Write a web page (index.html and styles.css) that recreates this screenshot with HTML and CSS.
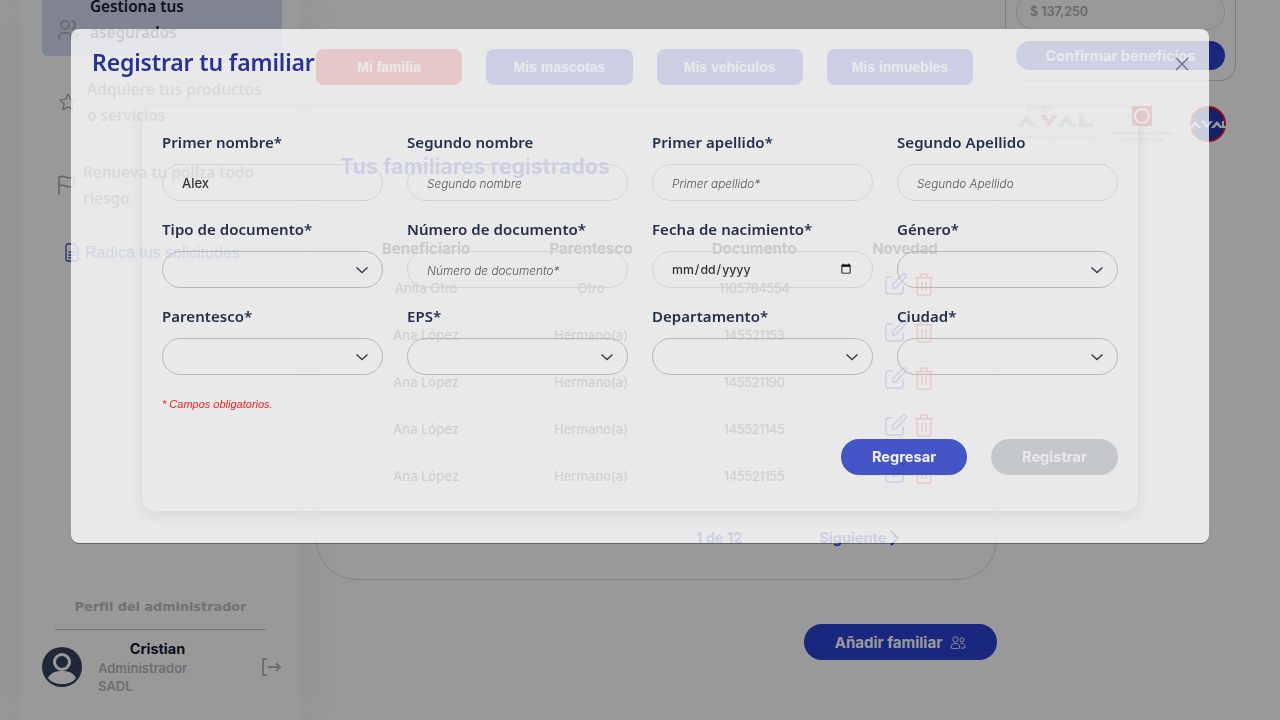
FILE: index.html
```html
<!DOCTYPE html>
<html lang="es">
<head>
<meta charset="utf-8">
<title>Registrar tu familiar</title>
<link rel="stylesheet" href="styles.css">
</head>
<body>
<div class="page">
  <aside class="sidebar">
    <nav class="nav">
      <a class="nav-item nav-active">
        <svg class="ico-users" viewBox="0 0 24 24" width="24" height="24"><circle cx="9" cy="7" r="4"/><path d="M3 21v-2a4 4 0 0 1 4-4h4a4 4 0 0 1 4 4v2M16 3.1a4 4 0 0 1 0 7.8M21 21v-2a4 4 0 0 0-3-3.9"/></svg>
        <span>Gestiona tus asegurados</span>
      </a>
      <a class="nav-item nav-second">
        <svg viewBox="0 0 24 24" width="20" height="20"><path d="M12 2.5l2.9 6.2 6.6.9-4.8 4.6 1.2 6.7-5.9-3.2-5.9 3.2 1.2-6.7-4.8-4.6 6.6-.9z"/></svg>
        <span>Adquiere tus productos o servicios</span>
      </a>
      <a class="nav-item nav-third">
        <svg viewBox="0 0 17 20" width="17" height="20"><path d="M1 19V2c4-2 5-.5 8 .5 2 .7 4 .5 7-.5v9c-3 1-5 1.200-7 .5-3-1-4-2.500-8-.5"/></svg>
        <span>Renueva tu póliza todo riesgo</span>
      </a>
      <a class="nav-item nav-link">
        <svg viewBox="0 0 14 19" width="14" height="19"><path d="M1 2.500A1.500 1.500 0 0 1 2.500 1H9l4 4v11.500a1.500 1.500 0 0 1-1.500 1.500h-9A1.500 1.500 0 0 1 1 16.500zM4 9h6M4 12h6M4 15h4"/></svg>
        <span>Radica tus solicitudes</span>
      </a>
    </nav>
    <div class="profile">
      <h4 class="profile-title">Perfil del administrador</h4>
      <div class="profile-row">
        <svg class="avatar" viewBox="0 0 40 40" width="40" height="40"><circle cx="20" cy="20" r="20" fill="#344460"/><circle cx="20" cy="15" r="7.500" fill="none" stroke="#fff" stroke-width="3"/><path d="M6 31c3-6 8-7 14-7s11 1 14 7c-3 4-8 6-14 6s-11-2-14-6z" fill="#fff"/></svg>
        <div class="profile-text">
          <div class="profile-name">Cristian</div>
          <div class="profile-role">Administrador<br>SADL</div>
        </div>
        <svg class="logout" viewBox="0 0 20 18" width="20" height="18"><path d="M5 1H1v16h4M6 9h12M14 5l4 4-4 4"/></svg>
      </div>
    </div>
  </aside>

  <main class="main">
    <div class="tabs">
      <button class="tab tab-active">Mi familia</button>
      <button class="tab">Mis mascotas</button>
      <button class="tab">Mis vehículos</button>
      <button class="tab">Mis inmuebles</button>
    </div>
    <section class="list-card">
      <h2 class="list-title">Tus familiares registrados</h2>
      <div class="table">
        <div class="row row-head"><span>Beneficiario</span><span>Parentesco</span><span>Documento</span><span>Novedad</span></div>
        <div class="row"><span>Anita Otro</span><span>Otro</span><span>1105784554</span>
          <span class="actions">
            <svg class="ico-edit" viewBox="0 0 24 24" width="23" height="23"><path d="M9 4H5a3 3 0 0 0-3 3v12a3 3 0 0 0 3 3h12a3 3 0 0 0 3-3v-6"/><path d="M9 16v-4L19.500 1.500a1.800 1.800 0 0 1 3 3L12 15.500z"/></svg>
            <svg class="ico-trash" viewBox="0 0 20 24" width="20" height="23"><path d="M1 5h18M6.500 5V2.500a1.500 1.500 0 0 1 1.500-1.500h4a1.500 1.500 0 0 1 1.500 1.500V5M3 5v16a2 2 0 0 0 2 2h10a2 2 0 0 0 2-2V5M8 10v8M12 10v8"/></svg>
          </span></div>
        <div class="row"><span>Ana López</span><span>Hermano(a)</span><span>145521153</span>
          <span class="actions">
            <svg class="ico-edit" viewBox="0 0 24 24" width="23" height="23"><path d="M9 4H5a3 3 0 0 0-3 3v12a3 3 0 0 0 3 3h12a3 3 0 0 0 3-3v-6"/><path d="M9 16v-4L19.500 1.500a1.800 1.800 0 0 1 3 3L12 15.500z"/></svg>
            <svg class="ico-trash" viewBox="0 0 20 24" width="20" height="23"><path d="M1 5h18M6.500 5V2.500a1.500 1.500 0 0 1 1.500-1.500h4a1.500 1.500 0 0 1 1.500 1.500V5M3 5v16a2 2 0 0 0 2 2h10a2 2 0 0 0 2-2V5M8 10v8M12 10v8"/></svg>
          </span></div>
        <div class="row"><span>Ana López</span><span>Hermano(a)</span><span>145521190</span>
          <span class="actions">
            <svg class="ico-edit" viewBox="0 0 24 24" width="23" height="23"><path d="M9 4H5a3 3 0 0 0-3 3v12a3 3 0 0 0 3 3h12a3 3 0 0 0 3-3v-6"/><path d="M9 16v-4L19.500 1.500a1.800 1.800 0 0 1 3 3L12 15.500z"/></svg>
            <svg class="ico-trash" viewBox="0 0 20 24" width="20" height="23"><path d="M1 5h18M6.500 5V2.500a1.500 1.500 0 0 1 1.500-1.500h4a1.500 1.500 0 0 1 1.500 1.500V5M3 5v16a2 2 0 0 0 2 2h10a2 2 0 0 0 2-2V5M8 10v8M12 10v8"/></svg>
          </span></div>
        <div class="row"><span>Ana López</span><span>Hermano(a)</span><span>145521145</span>
          <span class="actions">
            <svg class="ico-edit" viewBox="0 0 24 24" width="23" height="23"><path d="M9 4H5a3 3 0 0 0-3 3v12a3 3 0 0 0 3 3h12a3 3 0 0 0 3-3v-6"/><path d="M9 16v-4L19.500 1.500a1.800 1.800 0 0 1 3 3L12 15.500z"/></svg>
            <svg class="ico-trash" viewBox="0 0 20 24" width="20" height="23"><path d="M1 5h18M6.500 5V2.500a1.500 1.500 0 0 1 1.500-1.500h4a1.500 1.500 0 0 1 1.500 1.500V5M3 5v16a2 2 0 0 0 2 2h10a2 2 0 0 0 2-2V5M8 10v8M12 10v8"/></svg>
          </span></div>
        <div class="row"><span>Ana López</span><span>Hermano(a)</span><span>145521155</span>
          <span class="actions">
            <svg class="ico-edit" viewBox="0 0 24 24" width="23" height="23"><path d="M9 4H5a3 3 0 0 0-3 3v12a3 3 0 0 0 3 3h12a3 3 0 0 0 3-3v-6"/><path d="M9 16v-4L19.500 1.500a1.800 1.800 0 0 1 3 3L12 15.500z"/></svg>
            <svg class="ico-trash" viewBox="0 0 20 24" width="20" height="23"><path d="M1 5h18M6.500 5V2.500a1.500 1.500 0 0 1 1.500-1.500h4a1.500 1.500 0 0 1 1.500 1.500V5M3 5v16a2 2 0 0 0 2 2h10a2 2 0 0 0 2-2V5M8 10v8M12 10v8"/></svg>
          </span></div>
      </div>
      <div class="pager">
        <span>1 de 12</span>
        <span class="pager-next">Siguiente
          <svg viewBox="0 0 10 16" width="10" height="16"><path d="M2 1l7 7-7 7"/></svg>
        </span>
      </div>
    </section>
    <div class="add-row">
      <button class="btn-add">Añadir familiar
        <svg viewBox="0 0 18 16" width="16" height="15"><circle cx="6" cy="4.500" r="3"/><circle cx="13.500" cy="5" r="2.300"/><path d="M1 14c0-3 2-5 5-5s5 2 5 5c-1.500 1.200-8.500 1.200-10 0zM12 9c3-.5 5 1.500 5 4.500-1 .8-3 1-4.500 1"/></svg>
      </button>
    </div>
  </main>

  <aside class="side">
    <div class="benefit-card">
      <div class="benefit-value">$ 137,250</div>
      <button class="btn-confirm">Confirmar beneficios</button>
    </div>
    <div class="logos">
      <div class="logo-aval">
        <div class="logo-grupo">Grupo</div>
        <svg viewBox="0 0 78 14" width="78" height="14"><path class="mark-blue" d="M0 14L10.500 2 21 14h-7l-3.500-5L7 14zM40 14L50.500 2 61 14h-7l-3.500-5L47 14z"/><path class="mark-red" d="M24 2h6l3 5 3-5h6L33 14z"/><path class="mark-blue" d="M63 2h5v8h9v4H63z"/></svg>
        <div class="logo-tag">Hacemos grupo con todo el país</div>
      </div>
      <div class="logo-org">
        <div class="org-square"><span class="org-ring"></span></div>
        <div class="org-text">Organización Luis Carlos Sarmiento Angulo</div>
      </div>
      <div class="logo-round">
        <svg viewBox="0 0 38 36" width="38" height="36"><circle cx="19" cy="18" r="17" fill="#2438b0" stroke="#d4142a" stroke-width="2"/><path d="M0 22l6-7 6 7H9l-3-3-3 3zM12 15h3l3 4 3-4h3l-6 7zM22 22l6-7 6 7h-3l-3-3-3 3zM33 15h2v5h3v2h-5z" fill="#fff"/></svg>
      </div>
    </div>
  </aside>
</div>

<div class="overlay">
  <div class="modal">
    <h1 class="modal-title">Registrar tu familiar</h1>
    <button class="close" aria-label="Cerrar">
      <svg viewBox="0 0 14 14" width="14" height="14"><path d="M1 1l12 12M13 1L1 13"/></svg>
    </button>
    <form class="form-card">
      <div class="fields">
        <label class="field"><span class="label">Primer nombre*</span><input class="input" value="Alex"></label>
        <label class="field"><span class="label">Segundo nombre</span><input class="input" placeholder="Segundo nombre"></label>
        <label class="field"><span class="label">Primer apellido*</span><input class="input" placeholder="Primer apellido*"></label>
        <label class="field"><span class="label">Segundo Apellido</span><input class="input" placeholder="Segundo Apellido"></label>

        <label class="field"><span class="label">Tipo de documento*</span><span class="select-wrap"><select class="input select"></select><svg class="chev" viewBox="0 0 14 8" width="14" height="8"><path d="M1.500 1.500L7 6.500l5.500-5"/></svg></span></label>
        <label class="field"><span class="label">Número de documento*</span><input class="input" placeholder="Número de documento*"></label>
        <label class="field"><span class="label">Fecha de nacimiento*</span><input class="input date" type="date"></label>
        <label class="field"><span class="label">Género*</span><span class="select-wrap"><select class="input select"></select><svg class="chev" viewBox="0 0 14 8" width="14" height="8"><path d="M1.500 1.500L7 6.500l5.500-5"/></svg></span></label>

        <label class="field"><span class="label">Parentesco*</span><span class="select-wrap"><select class="input select"></select><svg class="chev" viewBox="0 0 14 8" width="14" height="8"><path d="M1.500 1.500L7 6.500l5.500-5"/></svg></span></label>
        <label class="field"><span class="label">EPS*</span><span class="select-wrap"><select class="input select"></select><svg class="chev" viewBox="0 0 14 8" width="14" height="8"><path d="M1.500 1.500L7 6.500l5.500-5"/></svg></span></label>
        <label class="field"><span class="label">Departamento*</span><span class="select-wrap"><select class="input select"></select><svg class="chev" viewBox="0 0 14 8" width="14" height="8"><path d="M1.500 1.500L7 6.500l5.500-5"/></svg></span></label>
        <label class="field"><span class="label">Ciudad*</span><span class="select-wrap"><select class="input select"></select><svg class="chev" viewBox="0 0 14 8" width="14" height="8"><path d="M1.500 1.500L7 6.500l5.500-5"/></svg></span></label>
      </div>
      <p class="note">* Campos obligatorios.</p>
      <div class="form-actions">
        <button type="button" class="btn btn-back">Regresar</button>
        <button type="button" class="btn btn-save">Registrar</button>
      </div>
    </form>
  </div>
</div>
</body>
</html>
```
FILE: styles.css
```css
* { box-sizing: border-box; }
html, body { margin: 0; height: 720px; overflow: hidden; background: #fff; }
body { font-family: "Inter", "Liberation Sans", sans-serif; color: #1f2a3a; }

.page { display: flex; height: 720px; align-items: flex-start; }

/* Sidebar */
.sidebar {
  width: 280px; height: 720px; margin-left: 20px; flex: none;
  display: flex; flex-direction: column; justify-content: space-between;
  background: #fff; box-shadow: 0 0 40px rgba(0,0,0,.07);
}
.nav { padding-left: 22px; padding-right: 18px; }
.nav-item {
  display: flex; align-items: center; gap: 9px;
  font-family: "Noto Sans", sans-serif; font-weight: 600; font-size: 15.300px;
  line-height: 26px; color: #888;
}
.nav-item svg { flex: none; fill: none; stroke: #a5a5a5; stroke-width: 1.500; stroke-linecap: round; stroke-linejoin: round; }
.nav-active {
  margin-top: -18px; padding: 10px 16px 11px 14px; height: 74px; gap: 10px;
  background: #d5dcf2; border-radius: 0 0 6px 6px; color: #121a35;
}
.nav-active svg { margin-top: 22px; }
.nav-second { margin-top: 20px; padding-left: 16px; padding-right: 10px; }
.nav-third { margin-top: 31px; padding-left: 16px; padding-right: 20px; gap: 8px; }
.nav-link {
  margin-top: 32px; padding-left: 23px; gap: 6px;
  font-family: "Liberation Sans", sans-serif; font-weight: 400; font-size: 16px; line-height: 18px; color: #3f57d8;
}
.nav-link svg { stroke: #3a4bc4; stroke-width: 1.300; }

.profile { padding: 0 18px 0 22px; margin-bottom: 25px; }
.profile-title {
  margin: 0 16px 0 13px; padding-bottom: 12px; border-bottom: 1px solid #bcc0d8; text-align: center;
  font-family: "DejaVu Sans", sans-serif; font-weight: 700; font-size: 12.800px; line-height: 20px; color: #bdbdbd;
}
.profile-row { display: flex; align-items: center; margin-top: 9px; }
.avatar { flex: none; }
.profile-text { margin-left: 16px; width: 165px; }
.profile-name { text-align: center; width: 119px; font-weight: 700; font-size: 14.500px; line-height: 20px; color: #121a35; }
.profile-role { font-weight: 600; font-size: 13px; line-height: 18px; color: #b8b8bc; }
.logout { flex: none; fill: none; stroke: #b5b5b5; stroke-width: 1.800; }

/* Main column */
.main { width: 681px; margin-left: 16px; flex: none; padding-top: 49px; }
.tabs { display: flex; gap: 24px; width: 657px; }
.tab {
  flex: 1; height: 36px; border: 0; border-radius: 8px; background: #2b41d0; color: #fff;
  font-family: "Liberation Sans", sans-serif; font-weight: 700; font-size: 14px;
}
.tab-active { background: #ee0a0a; }
.list-card { height: 450px; margin-top: 45px; border: 1px solid #dcdcdc; border-radius: 40px; padding: 22px 24px 0 23px; }
.list-title { margin: 0; font-weight: 700; font-size: 21px; line-height: 28px; color: #2b41d0; letter-spacing: .17px; }
.table { margin-top: 49px; margin-left: 1px; width: 632px; font-size: 13px; color: #444; font-weight: 500; }
.row { display: grid; grid-template-columns: 170px 160px 166px 136px; height: 47px; padding-bottom: 6px; align-items: center; border-bottom: 1px solid #e3e3e3; text-align: center; }
.row span:nth-child(3) { letter-spacing: -.5px; }
.row-head { height: 38px; padding-bottom: 0; font-weight: 700; font-size: 15px; line-height: 20px; color: #111; }
.row-head span:nth-child(3) { letter-spacing: 0; }
.actions { display: flex; gap: 7px; padding-left: 47px; margin-top: -7px; }
.ico-edit { fill: none; stroke: #2b41d0; stroke-width: 1.600; stroke-linejoin: round; }
.ico-trash { fill: none; stroke: #e81414; stroke-width: 1.600; stroke-linecap: round; stroke-linejoin: round; }
.pager { display: flex; margin-top: 24px; padding-left: 356px; font-weight: 700; font-size: 14.500px; color: #2b41d0; line-height: 22px; }
.pager-next { display: inline-flex; align-items: center; gap: 3px; margin-left: 77px; }
.pager-next svg { fill: none; stroke: #2b41d0; stroke-width: 1.800; }
.add-row { display: flex; justify-content: flex-end; margin-top: 44px; }
.btn-add {
  display: flex; align-items: center; justify-content: center; gap: 8px; width: 193px; height: 36px; border: 0; border-radius: 18px;
  background: #2c41d4; color: #fff; font-family: "Inter", sans-serif; font-weight: 700; font-size: 15px;
}
.btn-add svg { fill: none; stroke: #fff; stroke-width: 1; }

/* Right column */
.side { width: 231px; margin-left: 8px; flex: none; }
.benefit-card { height: 121px; margin-top: -40px; padding: 34px 10px 0; border: 1px solid #d2d2d2; border-top: 0; border-radius: 0 0 16px 16px; }
.benefit-value { height: 36px; border: 1px solid #e0e0e0; border-radius: 18px; padding-left: 13px; line-height: 34px; font-weight: 600; font-size: 12.500px; color: #b0b0b0; }
.btn-confirm { display: block; width: 100%; height: 29px; margin-top: 11px; border: 0; border-radius: 15px; background: #2c41d4; color: #fff; font-family: "Inter", sans-serif; font-weight: 700; font-size: 14.500px; }
.logos { display: flex; margin-top: 24px; padding-left: 11px; align-items: flex-start; }
.logo-aval { width: 78px; text-align: left; color: #8fa0b8; }
.logo-grupo { font-size: 7.500px; line-height: 8px; letter-spacing: 1px; padding-left: 10px; }
.logo-aval svg { display: block; }
.logo-tag { font-size: 5.300px; white-space: nowrap; margin-top: 7px; }
.mark-blue { fill: #a8b8d0; }
.mark-red { fill: #e07070; }
.logo-org { width: 62px; margin-left: 17px; text-align: center; }
.org-square { width: 20px; height: 20px; margin: 1px auto 0; background: #e3242b; display: flex; align-items: center; justify-content: center; }
.org-ring { width: 16px; height: 16px; border: 2px solid #fff; border-radius: 50%; }
.org-text { font-size: 5.200px; line-height: 6px; margin-top: 4px; color: #888; }
.logo-round { margin-left: 16px; margin-top: 1px; }

/* Modal */
.overlay { position: fixed; inset: 0; background: rgba(0,0,0,.4); display: flow-root; }
.modal {
  position: relative; width: 1138px; height: 514px; margin: 29px auto 0;
  background: rgba(255,255,255,.78);
  box-shadow: 0 1px 0 rgba(0,0,0,.35); border-radius: 8px;
  padding: 15px 71px 0;
}
.modal-title {
  margin: 0 0 0 -50px; font-family: "Noto Sans", sans-serif; font-weight: 600; font-size: 23px; letter-spacing: -.15px; line-height: 36px; color: #26339a;
}
.close { position: absolute; right: 20px; top: 28px; padding: 0; border: 0; background: none; line-height: 0; }
.close svg { fill: none; stroke: #6d7080; stroke-width: 1.400; }
.form-card { height: 403px; margin-top: 28px; padding: 24px 20px 0; border-radius: 12px; box-shadow: 0 4px 16px rgba(0,0,0,.08); }
.fields { display: grid; grid-template-columns: repeat(4, 221px); column-gap: 24px; row-gap: 18px; }
.field { display: flex; flex-direction: column; }
.label { font-family: "Noto Sans", sans-serif; font-weight: 600; font-size: 15px; letter-spacing: .05px; line-height: 20px; margin-bottom: 12px; color: #25304a; white-space: nowrap; }
.input {
  display: block; width: 221px; height: 37px; padding: 0 19px; border: 1px solid #d2d3d6; border-radius: 18.500px; background: transparent;
  font-family: "Inter", sans-serif; font-weight: 500; font-size: 13px; color: #333; outline: 0;
}
.input::placeholder { font-style: italic; font-weight: 300; font-size: 11.800px; color: #555; opacity: 1; }
.date { font-size: 12.300px; padding: 0 18px; color: #333; }
.select { appearance: none; border-color: #b5b5b5; }
.select-wrap { position: relative; display: block; }
.chev { position: absolute; right: 14px; top: 15px; fill: none; stroke: #3a3f4a; stroke-width: 1.500; pointer-events: none; }
.note { margin: 21px 0 0; font-family: "Liberation Sans", sans-serif; font-style: italic; font-size: 11px; line-height: 16px; color: #ee2222; }
.form-actions { display: flex; justify-content: flex-end; gap: 24px; margin-top: 27px; }
.btn { width: 127px; height: 36px; border: 0; border-radius: 18px; font-family: "Inter", sans-serif; font-weight: 700; font-size: 14.600px; }
.btn-back { width: 126px; background: rgba(39,60,193,.85); color: #f4f4fa; }
.btn-save { background: #c5c8cb; color: #e9e9e9; }
```
